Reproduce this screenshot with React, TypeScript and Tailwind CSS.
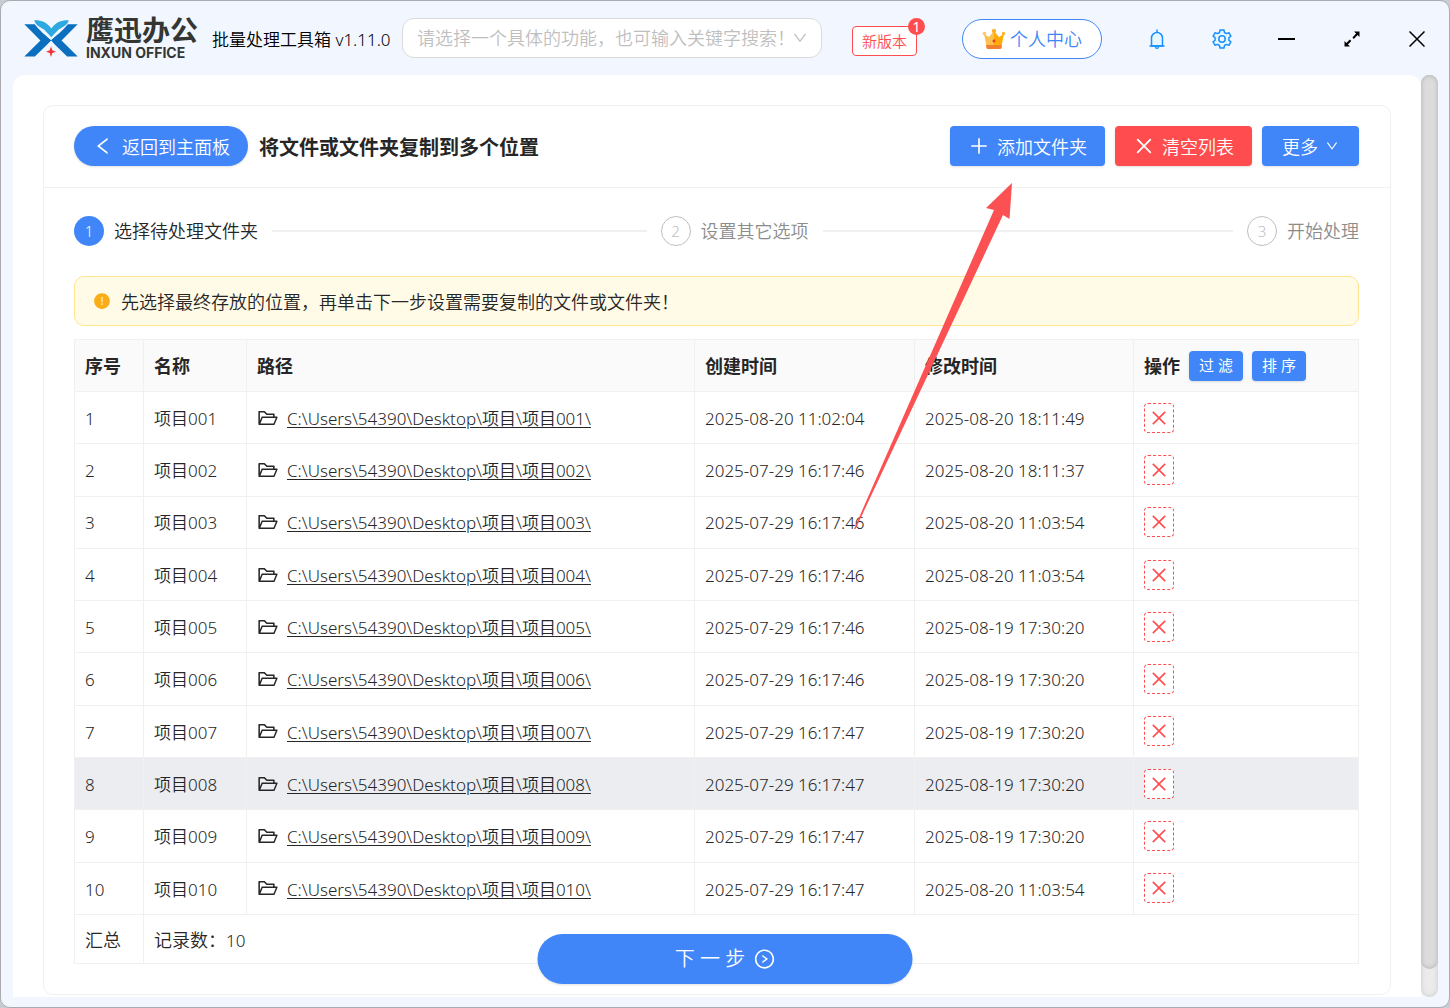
import type { ReactNode } from "react";
import {
  AiFillExclamationCircle,
  AiOutlineClose,
  AiOutlineDown,
  AiOutlineFolderOpen,
  AiOutlineLeft,
  AiOutlinePlus,
  AiOutlineRightCircle,
} from "react-icons/ai";

type Folder = { id: number; name: string; created: string; modified: string };

const folders: Folder[] = [
  { id: 1, name: "项目001", created: "2025-08-20 11:02:04", modified: "2025-08-20 18:11:49" },
  { id: 2, name: "项目002", created: "2025-07-29 16:17:46", modified: "2025-08-20 18:11:37" },
  { id: 3, name: "项目003", created: "2025-07-29 16:17:46", modified: "2025-08-20 11:03:54" },
  { id: 4, name: "项目004", created: "2025-07-29 16:17:46", modified: "2025-08-20 11:03:54" },
  { id: 5, name: "项目005", created: "2025-07-29 16:17:46", modified: "2025-08-19 17:30:20" },
  { id: 6, name: "项目006", created: "2025-07-29 16:17:46", modified: "2025-08-19 17:30:20" },
  { id: 7, name: "项目007", created: "2025-07-29 16:17:47", modified: "2025-08-19 17:30:20" },
  { id: 8, name: "项目008", created: "2025-07-29 16:17:47", modified: "2025-08-19 17:30:20" },
  { id: 9, name: "项目009", created: "2025-07-29 16:17:47", modified: "2025-08-19 17:30:20" },
  { id: 10, name: "项目010", created: "2025-07-29 16:17:47", modified: "2025-08-20 11:03:54" },
];

const selectedId = 8;

function LogoMark() {
  return (
    <svg viewBox="70 56 164 112" className="h-[37px] w-[54px]" aria-hidden="true">
      <path d="M71 69H104L153 118L103 167H71L120 118Z" fill="#0a6fbe" />
      <path d="M233 69H200L151 118L201 167H233L184 118Z" fill="#0a6fbe" />
      <path d="M153 118L144 128L152 136L160 128Z" fill="#f2f7ff" />
      <path d="M95 56C104 76 130 100 152 116C174 100 202 76 211 56Z" fill="#f2f7ff" />
      <path d="M101 57C120 56 140 62 153 82C166 62 186 56 206 57C201 72 186 78 176 84C168 92 160 100 153 108C146 100 138 92 130 84C120 78 106 72 101 57Z" fill="#2ba9e0" />
      <path d="M152 136L156 148L167 152L156 156L152 168L148 156L137 152L148 148Z" fill="#f0343c" />
    </svg>
  );
}

function Crown() {
  return (
    <svg viewBox="0 0 24 24" className="size-6" aria-hidden="true">
      <path d="M2 7L7 10L12 4L12 19H4.500Z" fill="#fbc04d" />
      <path d="M22 7L17 10L12 4V19H19.500Z" fill="#ffab0a" />
      <path d="M4 18H20L19.500 21Q19.300 22 18 22H6Q4.700 22 4.500 21Z" fill="#f4802f" />
      <circle cx="12" cy="4" r="2.200" fill="#ffb22c" />
      <circle cx="2.500" cy="6.500" r="1.700" fill="#ffc35a" />
      <circle cx="21.500" cy="6.500" r="1.700" fill="#ffb22c" />
      <path d="M12 12L13.800 14L12 16L10.200 14Z" fill="#e8412e" />
    </svg>
  );
}

function Bell() {
  return (
    <svg viewBox="0 0 20 20" className="size-5" fill="none" stroke="#1890ff" strokeWidth="1.500" aria-hidden="true">
      <path d="M4.500 17V9a5.500 5.500 0 0 1 11 0v8Z" fill="#e6f7ff" />
      <path d="M2.500 17h15M10 3.500V.5" />
      <path d="M8.300 18.200a1.800 1.500 0 0 0 3.400 0" />
    </svg>
  );
}

function Gear() {
  return (
    <svg viewBox="0 0 20 20" className="size-5" fill="none" stroke="#1890ff" strokeWidth="1.500" strokeLinejoin="round" aria-hidden="true">
      <path
        d="M8 1h4l.5 2.500 1.900 1.100 2.500-.9 2 3.400-2 1.700v2.400l2 1.700-2 3.400-2.500-.9-1.900 1.100L12 19H8l-.5-2.500-1.900-1.100-2.500.9-2-3.400 2-1.700V8.800l-2-1.700 2-3.400 2.500.9 1.900-1.100Z"
        fill="#e6f7ff"
      />
      <circle cx="10" cy="10" r="3.200" fill="#f2f7ff" />
    </svg>
  );
}

function Expand() {
  return (
    <svg viewBox="0 0 16 16" className="size-4" aria-hidden="true">
      <path d="M15.500.5V6L13.600 4.100L9.800 7.900L8.500 6.600L12.100 2.600L10 .5ZM.5 15.500V10L2.400 11.900L5.800 8.500L7.300 10L3.900 13.400L6 15.500Z" />
    </svg>
  );
}

function WindowButton({ label, children }: { label: string; children: ReactNode }) {
  return (
    <button aria-label={label} className="flex h-10 w-[65px] items-center justify-center text-black">
      {children}
    </button>
  );
}

function Header() {
  return (
    <header className="flex h-[74px] shrink-0 items-center pl-[23px]">
      <div className="flex items-center gap-2">
        <LogoMark />
        <div className="flex flex-col gap-[3px] pb-0.5 text-[#333632]">
          <span className="text-[28px] leading-7 font-bold">鹰迅办公</span>
          <span className="font-['Inter'] text-[14px] leading-3 font-bold">INXUN OFFICE</span>
        </div>
      </div>
      <span className="ml-3.5 w-[190px] pt-1 text-[17px] whitespace-nowrap text-black">批量处理工具箱 v1.11.0</span>
      <div className="relative w-[420px]">
        <input
          aria-label="搜索功能"
          placeholder="请选择一个具体的功能，也可输入关键字搜索！"
          className="h-10 w-full rounded-xl border border-[#d9d9d9] bg-white pr-8 pl-3.5 text-[18px] outline-none placeholder:text-[#bfbfbf]"
        />
        <AiOutlineDown className="pointer-events-none absolute top-3 right-3.5 size-4 text-[#bfbfbf]" />
      </div>
      <button className="relative mt-1.5 ml-[30px] h-[30px] w-[65px] rounded-sm border border-[#ff4d4f] bg-white text-[15px] text-[#ff4d4f]">
        新版本
        <span className="absolute -top-[9px] -right-[9px] flex size-[17px] items-center justify-center rounded-full bg-[#ff4d4f] text-[14px] font-normal text-white">
          1
        </span>
      </button>
      <button className="mt-0.5 ml-[45px] flex h-10 w-[140px] items-center justify-center gap-1 rounded-full border border-[#4086f8] bg-white text-[18px] text-[#4086f8]">
        <Crown />
        个人中心
      </button>
      <nav className="ml-auto flex pt-0.5">
        <WindowButton label="通知">
          <Bell />
        </WindowButton>
        <WindowButton label="设置">
          <Gear />
        </WindowButton>
        <WindowButton label="最小化">
          <span className="h-0.5 w-[17px] bg-black" />
        </WindowButton>
        <WindowButton label="最大化">
          <Expand />
        </WindowButton>
        <WindowButton label="关闭">
          <svg viewBox="0 0 16 16" className="size-4" stroke="currentColor" strokeWidth="1.500" aria-hidden="true">
            <path d="M.5.5L15.500 15.500M15.500.5L.5 15.500" />
          </svg>
        </WindowButton>
      </nav>
    </header>
  );
}

function Step({ index, label, active = false, last = false }: { index: number; label: string; active?: boolean; last?: boolean }) {
  return (
    <li className={last ? "flex items-center gap-2.5" : "flex flex-1 items-center gap-2.5"}>
      <span
        className={
          active
            ? "flex size-[30px] items-center justify-center rounded-full bg-[#4086f8] text-[15px] text-white"
            : "flex size-[30px] items-center justify-center rounded-full border border-[#bfbfbf] text-[15px] text-[#bfbfbf]"
        }
      >
        {index}
      </span>
      <span className={active ? "text-[18px] text-[#262626]" : "text-[18px] text-[#8c8c8c]"}>{label}</span>
      {!last && <span className="mr-3.5 ml-1 h-0.5 flex-1 bg-[#f0f0f0]" />}
    </li>
  );
}

const cell = "border border-[#f0f0f0] px-2.5 pt-0.5 pb-0 text-left whitespace-nowrap";
const actionCell = "border border-[#f0f0f0] px-2.5 py-0 text-left whitespace-nowrap";
const smallButton = "h-[30px] w-[54px] rounded-sm bg-[#4086f8] text-[15px] font-normal text-white shadow-sm";
const toolButton = "flex h-10 items-center gap-[7px] rounded-sm text-[18px] text-white shadow-sm";

function FolderTable() {
  return (
    <table className="mt-[13px] h-[625px] w-full table-fixed border-collapse text-[17px] text-[#262626]">
      <colgroup>
        <col className="w-[69px]" />
        <col className="w-[103px]" />
        <col />
        <col className="w-[220px]" />
        <col className="w-[219px]" />
        <col className="w-[225px]" />
      </colgroup>
      <thead>
        <tr className="h-[52px] bg-[#fafafa] text-[18px] font-bold">
          <th className={cell}>序号</th>
          <th className={cell}>名称</th>
          <th className={cell}>路径</th>
          <th className={cell}>创建时间</th>
          <th className={cell}>修改时间</th>
          <th className={actionCell}>
            <div className="flex items-center gap-[9px]">
              <span className="pt-0.5">操作</span>
              <button className={smallButton}>过 滤</button>
              <button className={smallButton}>排 序</button>
            </div>
          </th>
        </tr>
      </thead>
      <tbody>
        {folders.map((folder) => (
          <tr key={folder.id} className={folder.id === selectedId ? "h-[52px] bg-[#ebedf1]" : "h-[52px]"}>
            <td className={cell}>{folder.id}</td>
            <td className={cell}>{folder.name}</td>
            <td className={cell}>
              <div className="flex items-center gap-2">
                <AiOutlineFolderOpen className="mb-0.5 size-[22px]" />
                <a href="#" className="underline underline-offset-2">
                  {`C:\\Users\\54390\\Desktop\\项目\\${folder.name}\\`}
                </a>
              </div>
            </td>
            <td className={cell}>{folder.created}</td>
            <td className={cell}>{folder.modified}</td>
            <td className={actionCell}>
              <button
                aria-label={`移除 ${folder.name}`}
                className="flex size-[30px] items-center justify-center rounded-sm border border-dashed border-[#ff4d4f] bg-white text-[#ff4d4f]"
              >
                <AiOutlineClose className="size-5" />
              </button>
            </td>
          </tr>
        ))}
      </tbody>
      <tfoot>
        <tr className="h-[49px] text-[18px]">
          <td className={cell}>汇总</td>
          <td className={cell} colSpan={5}>
            记录数：<span className="text-[17px]">10</span>
          </td>
        </tr>
      </tfoot>
    </table>
  );
}

function PointerArrow() {
  return (
    <svg
      viewBox="854 183 160 346"
      className="pointer-events-none absolute top-[182px] right-[435px] h-[346px] w-[160px]"
      aria-hidden="true"
    >
      <path d="M1012 183L1009.500 219L1003 215L855.500 529H854L994 210L986 208Z" fill="#fc5153" />
    </svg>
  );
}

export default function App() {
  return (
    <div className="min-h-screen bg-[#c9ccd2] font-['Noto_Sans','Noto_Sans_CJK_SC',sans-serif] font-[350]">
      <div className="relative flex min-h-screen flex-col rounded-[10px] border border-[#aaabb0] bg-[#f2f7ff]">
        <Header />
        <div className="flex flex-1 pr-[11px] pb-2.5 pl-3">
          <main className="min-w-0 flex-1 rounded-t-xl bg-white px-[30px] pt-[30px] pb-0.5">
            <section className="rounded-[10px] border border-[#f0f0f0]">
              <div className="flex items-center border-b border-[#f0f0f0] pt-5 pr-[31px] pb-[21px] pl-[30px]">
                <button className="flex h-10 items-center gap-2 rounded-full bg-[#4086f8] px-[18px] text-[18px] text-white shadow-sm">
                  <AiOutlineLeft className="size-[22px]" />
                  <span className="pt-0.5">返回到主面板</span>
                </button>
                <h1 className="ml-[11px] pt-1 text-[20px] font-bold text-[#262626]">将文件或文件夹复制到多个位置</h1>
                <div className="ml-auto flex gap-2.5">
                  <button className={`${toolButton} bg-[#4086f8] px-[18px]`}>
                    <AiOutlinePlus className="size-[22px]" />
                    <span className="pt-0.5">添加文件夹</span>
                  </button>
                  <button className={`${toolButton} bg-[#ff4d4f] px-[18px]`}>
                    <AiOutlineClose className="size-[22px]" />
                    <span className="pt-0.5">清空列表</span>
                  </button>
                  <button className={`${toolButton} bg-[#4086f8] px-5`}>
                    <span className="pt-0.5">更多</span>
                    <AiOutlineDown className="size-3.5" />
                  </button>
                </div>
              </div>
              <div className="pt-7 pr-[31px] pb-[30px] pl-[30px]">
                <ol className="flex h-[30px] items-center">
                  <Step index={1} label="选择待处理文件夹" active />
                  <Step index={2} label="设置其它选项" />
                  <Step index={3} label="开始处理" last />
                </ol>
                <div
                  role="alert"
                  className="mt-[30px] flex h-[50px] items-center gap-2.5 rounded-[10px] border border-[#ffe58f] bg-[#fffbe6] px-[18px] text-[18px] text-[#262626]"
                >
                  <AiFillExclamationCircle className="size-[18px] text-[#faad14]" />
                  <span className="pt-0.5">先选择最终存放的位置，再单击下一步设置需要复制的文件或文件夹！</span>
                </div>
                <FolderTable />
              </div>
            </section>
          </main>
          <div className="w-[17px] rounded-full bg-[#ebebeb] shadow-[inset_0_0_5px_#c8c8c8]">
            <div className="h-[97%] w-full rounded-full bg-[#dcdcdc] shadow-[inset_0_0_5px_#b0b0b0]" />
          </div>
        </div>
        <button className="absolute bottom-[23px] left-1/2 flex h-[50px] w-[375px] -translate-x-1/2 items-center justify-center gap-2 rounded-full bg-[#4086f8] text-[20px] text-white shadow-sm">
          下 一 步
          <AiOutlineRightCircle className="size-[22px]" />
        </button>
        <PointerArrow />
      </div>
    </div>
  );
}
